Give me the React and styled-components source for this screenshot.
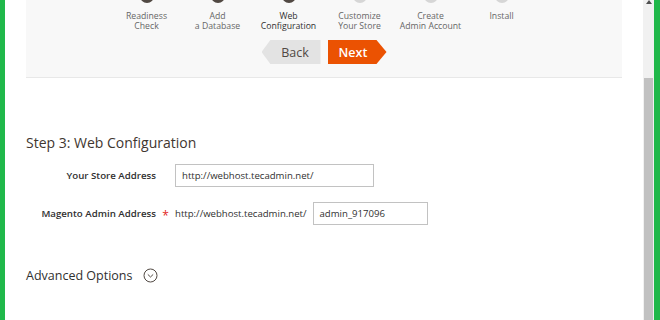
import React from "react";
import styled, { createGlobalStyle } from "styled-components";

const GlobalStyle = createGlobalStyle`
  html, body {
    margin: 0;
    padding: 0;
    background: #ffffff;
  }
  body {
    font-family: "Open Sans", "Liberation Sans", sans-serif;
    color: #303030;
  }
`;

const Frame = styled.div`
  display: flex;
  width: 660px;
  height: 320px;
  overflow: hidden;
  background: #ffffff;
`;

const GreenEdge = styled.div`
  flex: 0 0 ${(p) => p.$w}px;
  background: #20b84a;
`;

const Content = styled.div`
  flex: 1;
  padding-left: 21px;
  overflow: hidden;
  display: flex;
  flex-direction: column;
`;

const Panel = styled.div`
  width: 596px;
  height: 98px;
  margin-top: -20px;
  background: #f8f8f8;
  border-bottom: 1px solid #e8e8e8;
  box-sizing: border-box;
  display: flex;
  flex-direction: column;
  align-items: center;
`;

const Steps = styled.div`
  display: flex;
  position: relative;
  margin-top: 9px;
`;

const Track = styled.div`
  position: absolute;
  left: 35px;
  right: 35px;
  top: 6px;
  height: 3px;
  background: #e3e3e3;
`;

const Step = styled.div`
  width: 71px;
  display: flex;
  flex-direction: column;
  align-items: center;
  position: relative;
`;

const Dot = styled.div`
  width: 14px;
  height: 14px;
  border-radius: 50%;
  box-sizing: border-box;
  background: ${(p) => (p.$state === "todo" ? "#d6d6d6" : "#514943")};
  border: 2px solid ${(p) => (p.$state === "todo" ? "#d6d6d6" : "#514943")};
`;

const StepLabel = styled.div`
  margin-top: 8px;
  font-size: 8.7px;
  line-height: 10px;
  text-align: center;
  white-space: nowrap;
  color: ${(p) => (p.$active ? "#303030" : "#666666")};
`;

const Buttons = styled.div`
  display: flex;
  gap: 7px;
  margin-top: 9px;
`;

const NavButton = styled.div`
  width: 59px;
  height: 24px;
  display: flex;
  align-items: center;
  justify-content: center;
  font-size: 12.5px;
  font-weight: ${(p) => (p.$primary ? 600 : 400)};
  color: ${(p) => (p.$primary ? "#ffffff" : "#514943")};
  background: ${(p) => (p.$primary ? "#eb5202" : "#e3e3e3")};
  box-sizing: border-box;
  clip-path: ${(p) =>
    p.$primary
      ? "polygon(0 0, 83% 0, 100% 50%, 83% 100%, 0 100%)"
      : "polygon(15% 0, 100% 0, 100% 100%, 15% 100%, 0 50%)"};
  padding: ${(p) => (p.$primary ? "0 8px 0 0" : "0 0 0 8px")};
`;

const Heading = styled.h2`
  margin: 55px 0 0;
  font-size: 14px;
  font-weight: 400;
  color: #41362f;
  line-height: 20px;
`;

const Form = styled.div`
  display: grid;
  grid-template-columns: 130px 19px auto;
  row-gap: 15px;
  align-items: center;
  margin-top: 11px;
  justify-content: start;
`;

const Label = styled.div`
  text-align: right;
  font-size: 9.7px;
  font-weight: 600;
  color: #303030;
`;

const Star = styled.div`
  color: #e22626;
  font-size: 12px;
  text-align: center;
  padding-top: 3px;
`;

const Field = styled.div`
  display: flex;
  align-items: center;
  gap: 6px;
`;

const Prefix = styled.span`
  font-size: 9.6px;
  color: #303030;
`;

const Input = styled.div`
  width: ${(p) => p.$w}px;
  height: 23px;
  box-sizing: border-box;
  border: 1px solid #c2c2c2;
  background: #ffffff;
  padding: 0 6px;
  display: flex;
  align-items: center;
  font-size: 9.6px;
  color: #303030;
`;

const Advanced = styled.div`
  display: flex;
  align-items: center;
  gap: 11px;
  margin-top: 42px;
  font-size: 12.5px;
  color: #303030;
`;

const Scrollbar = styled.div`
  flex: 0 0 11px;
  background: #f1f1f1;
  display: flex;
  flex-direction: column;
  align-items: center;
`;

const ArrowUp = styled.div`
  width: 0;
  height: 0;
  border-left: 3px solid transparent;
  border-right: 3px solid transparent;
  border-bottom: 4px solid #505050;
`;

const Thumb = styled.div`
  width: 9px;
  margin-top: 74px;
  flex: 1;
  background: #c1c1c1;
`;

const steps = [
  { label: ["Readiness", "Check"], state: "done" },
  { label: ["Add", "a Database"], state: "done" },
  { label: ["Web", "Configuration"], state: "active" },
  { label: ["Customize", "Your Store"], state: "todo" },
  { label: ["Create", "Admin Account"], state: "todo" },
  { label: ["Install"], state: "todo" },
];

const ChevronCircle = () => (
  <svg width="15" height="15" viewBox="0 0 15 15">
    <circle cx="7.5" cy="7.5" r="6.5" fill="none" stroke="#514943" strokeWidth="1" />
    <path d="M4.8 6.4 L7.5 9 L10.2 6.4" fill="none" stroke="#514943" strokeWidth="1" />
  </svg>
);

export default function App() {
  return (
    <Frame>
      <GlobalStyle />
      <GreenEdge $w={5} />
      <Content>
        <Panel>
          <Steps>
            <Track />
            {steps.map((s) => (
              <Step key={s.label.join(" ")}>
                <Dot $state={s.state} />
                <StepLabel $active={s.state === "active"}>
                  {s.label.map((l) => (
                    <div key={l}>{l}</div>
                  ))}
                </StepLabel>
              </Step>
            ))}
          </Steps>
          <Buttons>
            <NavButton>Back</NavButton>
            <NavButton $primary>Next</NavButton>
          </Buttons>
        </Panel>
        <Heading>Step 3: Web Configuration</Heading>
        <Form>
          <Label>Your Store Address</Label>
          <div />
          <Field>
            <Input $w={199}>http://webhost.tecadmin.net/</Input>
          </Field>
          <Label>Magento Admin Address</Label>
          <Star>*</Star>
          <Field>
            <Prefix>http://webhost.tecadmin.net/</Prefix>
            <Input $w={115}>admin_917096</Input>
          </Field>
        </Form>
        <Advanced>
          Advanced Options
          <ChevronCircle />
        </Advanced>
      </Content>
      <Scrollbar>
        <ArrowUp />
        <Thumb />
      </Scrollbar>
      <GreenEdge $w={6} />
    </Frame>
  );
}
